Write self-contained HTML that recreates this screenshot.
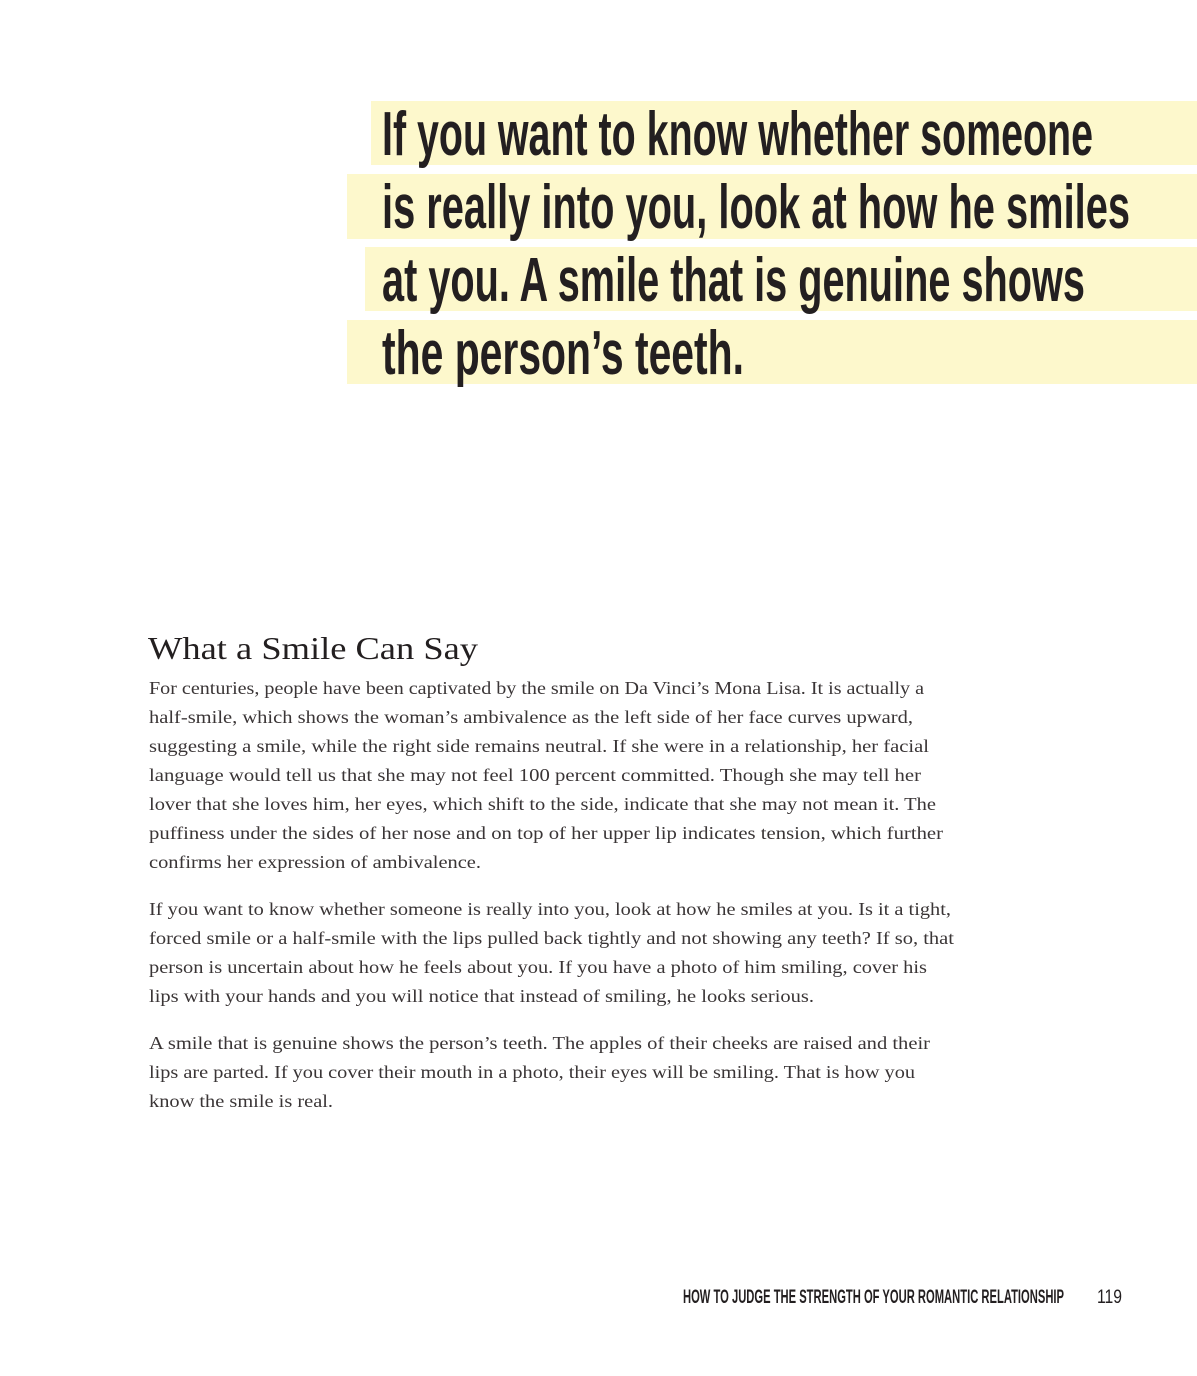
<!DOCTYPE html>
<html><head><meta charset="utf-8"><style>
html,body{margin:0;padding:0;background:#fff;}
svg{display:block}
.q{font-family:"Liberation Sans Narrow","Liberation Sans",sans-serif;font-weight:bold;font-size:62px;fill:#231f20}
.b{font-family:"Liberation Serif",serif;font-size:18px;fill:#3a3536}
.h{font-family:"Liberation Serif",serif;font-size:32px;fill:#231f20}
.f{font-family:"Liberation Sans Narrow","Liberation Sans",sans-serif;font-weight:bold;font-size:19px;fill:#231f20}
.n{font-family:"Liberation Sans",sans-serif;font-size:19px;fill:#231f20}
</style></head><body>
<svg width="1197" height="1376" viewBox="0 0 1197 1376" xmlns="http://www.w3.org/2000/svg">
<rect x="371" y="101" width="826" height="64" fill="#fdf8cc"/>
<rect x="347" y="174" width="850" height="65" fill="#fdf8cc"/>
<rect x="365" y="247" width="832" height="64" fill="#fdf8cc"/>
<rect x="347" y="320" width="850" height="64" fill="#fdf8cc"/>
<text class="q" x="382" y="155" textLength="711" lengthAdjust="spacingAndGlyphs">If you want to know whether someone</text>
<text class="q" x="382" y="228" textLength="748" lengthAdjust="spacingAndGlyphs">is really into you, look at how he smiles</text>
<text class="q" x="382" y="301" textLength="703" lengthAdjust="spacingAndGlyphs">at you. A smile that is genuine shows</text>
<text class="q" x="382" y="374" textLength="362" lengthAdjust="spacingAndGlyphs">the person’s teeth.</text>

<text class="h" x="148" y="659" textLength="330" lengthAdjust="spacingAndGlyphs">What a Smile Can Say</text>

<text class="b" x="149" y="694" textLength="775" lengthAdjust="spacingAndGlyphs">For centuries, people have been captivated by the smile on Da Vinci’s Mona Lisa. It is actually a</text>
<text class="b" x="149" y="723" textLength="764" lengthAdjust="spacingAndGlyphs">half-smile, which shows the woman’s ambivalence as the left side of her face curves upward,</text>
<text class="b" x="149" y="752" textLength="780" lengthAdjust="spacingAndGlyphs">suggesting a smile, while the right side remains neutral. If she were in a relationship, her facial</text>
<text class="b" x="149" y="781" textLength="772" lengthAdjust="spacingAndGlyphs">language would tell us that she may not feel 100 percent committed. Though she may tell her</text>
<text class="b" x="149" y="810" textLength="787" lengthAdjust="spacingAndGlyphs">lover that she loves him, her eyes, which shift to the side, indicate that she may not mean it. The</text>
<text class="b" x="149" y="839" textLength="794" lengthAdjust="spacingAndGlyphs">puffiness under the sides of her nose and on top of her upper lip indicates tension, which further</text>
<text class="b" x="149" y="868" textLength="332" lengthAdjust="spacingAndGlyphs">confirms her expression of ambivalence.</text>

<text class="b" x="149" y="915" textLength="802" lengthAdjust="spacingAndGlyphs">If you want to know whether someone is really into you, look at how he smiles at you. Is it a tight,</text>
<text class="b" x="149" y="944" textLength="805" lengthAdjust="spacingAndGlyphs">forced smile or a half-smile with the lips pulled back tightly and not showing any teeth? If so, that</text>
<text class="b" x="149" y="973" textLength="778" lengthAdjust="spacingAndGlyphs">person is uncertain about how he feels about you. If you have a photo of him smiling, cover his</text>
<text class="b" x="149" y="1002" textLength="665" lengthAdjust="spacingAndGlyphs">lips with your hands and you will notice that instead of smiling, he looks serious.</text>

<text class="b" x="149" y="1049" textLength="781" lengthAdjust="spacingAndGlyphs">A smile that is genuine shows the person’s teeth. The apples of their cheeks are raised and their</text>
<text class="b" x="149" y="1078" textLength="766" lengthAdjust="spacingAndGlyphs">lips are parted. If you cover their mouth in a photo, their eyes will be smiling. That is how you</text>
<text class="b" x="149" y="1107" textLength="184" lengthAdjust="spacingAndGlyphs">know the smile is real.</text>

<text class="f" x="683" y="1303" textLength="381" lengthAdjust="spacingAndGlyphs">HOW TO JUDGE THE STRENGTH OF YOUR ROMANTIC RELATIONSHIP</text>
<text class="n" x="1097" y="1303" textLength="25" lengthAdjust="spacingAndGlyphs">119</text>
</svg>
</body></html>
